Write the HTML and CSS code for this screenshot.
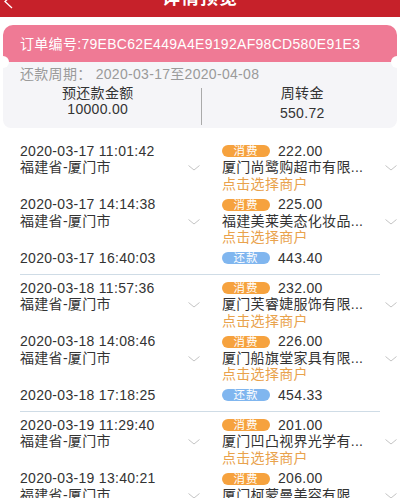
FILE: index.html
```html
<!DOCTYPE html>
<html lang="zh">
<head>
<meta charset="utf-8">
<link rel="stylesheet" href="styles.css">
</head>
<body>
<header class="topbar">
  <svg class="back" width="14" height="14" viewBox="0 0 14 14"><polyline points="12,-5 5,1.5 12,8" fill="none" stroke="#fff" stroke-width="1.3"/></svg>
  <div class="title">详情预览</div>
</header>

<section class="order">
  <div class="order-no">订单编号:79EBC62E449A4E9192AF98CD580E91E3</div>
  <div class="summary">
    <div class="period">还款周期： 2020-03-17至2020-04-08</div>
    <div class="stats">
      <div class="stat stat-left">
        <div class="stat-label">预还款金额</div>
        <div class="stat-value">10000.00</div>
      </div>
      <div class="divider"></div>
      <div class="stat stat-right">
        <div class="stat-label">周转金</div>
        <div class="stat-value stat-value-low">550.72</div>
      </div>
    </div>
  </div>
</section>

<main class="list">
  <div class="group">
    <div class="rec">
      <div class="left"><div class="line">2020-03-17 11:01:42</div><div class="line between">福建省-厦门市<svg class="chev" width="12" height="6" viewBox="0 0 12 6"><polyline points="0.5,0.5 6,5 11.5,0.5" fill="none" stroke="#c4c4c4" stroke-width="1"/></svg></div></div>
      <div class="right"><div class="line"><span class="badge pay">消费</span><span class="amt">222.00</span></div><div class="line between">厦门尚鹭购超市有限...<svg class="chev" width="12" height="6" viewBox="0 0 12 6"><polyline points="0.5,0.5 6,5 11.5,0.5" fill="none" stroke="#c4c4c4" stroke-width="1"/></svg></div><div class="line pick">点击选择商户</div></div>
    </div>
    <div class="rec">
      <div class="left"><div class="line">2020-03-17 14:14:38</div><div class="line between">福建省-厦门市<svg class="chev" width="12" height="6" viewBox="0 0 12 6"><polyline points="0.5,0.5 6,5 11.5,0.5" fill="none" stroke="#c4c4c4" stroke-width="1"/></svg></div></div>
      <div class="right"><div class="line"><span class="badge pay">消费</span><span class="amt">225.00</span></div><div class="line between">福建美莱美态化妆品...<svg class="chev" width="12" height="6" viewBox="0 0 12 6"><polyline points="0.5,0.5 6,5 11.5,0.5" fill="none" stroke="#c4c4c4" stroke-width="1"/></svg></div><div class="line pick">点击选择商户</div></div>
    </div>
    <div class="rec rec-repay">
      <div class="left"><div class="line">2020-03-17 16:40:03</div></div>
      <div class="right"><div class="line"><span class="badge repay">还款</span><span class="amt">443.40</span></div></div>
    </div>
  </div>
  <div class="sep"></div>
  <div class="group">
    <div class="rec">
      <div class="left"><div class="line">2020-03-18 11:57:36</div><div class="line between">福建省-厦门市<svg class="chev" width="12" height="6" viewBox="0 0 12 6"><polyline points="0.5,0.5 6,5 11.5,0.5" fill="none" stroke="#c4c4c4" stroke-width="1"/></svg></div></div>
      <div class="right"><div class="line"><span class="badge pay">消费</span><span class="amt">232.00</span></div><div class="line between">厦门芙睿婕服饰有限...<svg class="chev" width="12" height="6" viewBox="0 0 12 6"><polyline points="0.5,0.5 6,5 11.5,0.5" fill="none" stroke="#c4c4c4" stroke-width="1"/></svg></div><div class="line pick">点击选择商户</div></div>
    </div>
    <div class="rec">
      <div class="left"><div class="line">2020-03-18 14:08:46</div><div class="line between">福建省-厦门市<svg class="chev" width="12" height="6" viewBox="0 0 12 6"><polyline points="0.5,0.5 6,5 11.5,0.5" fill="none" stroke="#c4c4c4" stroke-width="1"/></svg></div></div>
      <div class="right"><div class="line"><span class="badge pay">消费</span><span class="amt">226.00</span></div><div class="line between">厦门船旗堂家具有限...<svg class="chev" width="12" height="6" viewBox="0 0 12 6"><polyline points="0.5,0.5 6,5 11.5,0.5" fill="none" stroke="#c4c4c4" stroke-width="1"/></svg></div><div class="line pick">点击选择商户</div></div>
    </div>
    <div class="rec rec-repay">
      <div class="left"><div class="line">2020-03-18 17:18:25</div></div>
      <div class="right"><div class="line"><span class="badge repay">还款</span><span class="amt">454.33</span></div></div>
    </div>
  </div>
  <div class="sep"></div>
  <div class="group">
    <div class="rec">
      <div class="left"><div class="line">2020-03-19 11:29:40</div><div class="line between">福建省-厦门市<svg class="chev" width="12" height="6" viewBox="0 0 12 6"><polyline points="0.5,0.5 6,5 11.5,0.5" fill="none" stroke="#c4c4c4" stroke-width="1"/></svg></div></div>
      <div class="right"><div class="line"><span class="badge pay">消费</span><span class="amt">201.00</span></div><div class="line between">厦门凹凸视界光学有...<svg class="chev" width="12" height="6" viewBox="0 0 12 6"><polyline points="0.5,0.5 6,5 11.5,0.5" fill="none" stroke="#c4c4c4" stroke-width="1"/></svg></div><div class="line pick">点击选择商户</div></div>
    </div>
    <div class="rec">
      <div class="left"><div class="line">2020-03-19 13:40:21</div><div class="line between">福建省-厦门市<svg class="chev" width="12" height="6" viewBox="0 0 12 6"><polyline points="0.5,0.5 6,5 11.5,0.5" fill="none" stroke="#c4c4c4" stroke-width="1"/></svg></div></div>
      <div class="right"><div class="line"><span class="badge pay">消费</span><span class="amt">206.00</span></div><div class="line between">厦门柯蒙曼美容有限...<svg class="chev" width="12" height="6" viewBox="0 0 12 6"><polyline points="0.5,0.5 6,5 11.5,0.5" fill="none" stroke="#c4c4c4" stroke-width="1"/></svg></div><div class="line pick">点击选择商户</div></div>
    </div>
  </div>
</main>
</body>
</html>
```
FILE: styles.css
```css
* { box-sizing: border-box; }
html, body { margin: 0; padding: 0; background: #fff; }
body {
  font-family: "Liberation Sans", "Noto Sans CJK SC", sans-serif;
  font-size: 14px;
  letter-spacing: 0.3px;
  color: #333;
  width: 400px;
  overflow: hidden;
}
.topbar {
  position: relative;
  height: 17px;
  background: #c6212a;
  overflow: hidden;
}
.back { position: absolute; left: 0; top: 0; }
.title {
  margin-top: -14px;
  line-height: 24px;
  text-align: center;
  color: #fff;
  font-size: 18px;
  font-weight: bold;
  letter-spacing: 1px;
}
.order {
  position: relative;
  margin: 8px 3px 0;
}
.order::before, .order::after {
  content: "";
  position: absolute;
  top: 31px;
  width: 12px;
  height: 12px;
  border-radius: 50%;
  background: #fff;
}
.order::before { left: -6px; }
.order::after { right: -6px; }
.order-no {
  height: 37px;
  line-height: 37px;
  padding-left: 17px;
  background: #ef7a95;
  color: #fff;
  border-radius: 10px 10px 0 0;
  padding-top: 1px;
}
.summary {
  background: #f5f5f8;
  border-radius: 0 0 8px 8px;
  padding: 4px 0 3px;
}
.period {
  line-height: 16px;
  padding-left: 17px;
  color: #9a9a9a;
}
.stats {
  display: flex;
  margin-top: 2px;
  height: 41px;
}
.stat { flex: 1; text-align: center; }
.stat-left { padding-right: 8px; }
.stat-right { padding-left: 6px; }
.stat-label { line-height: 18px; }
.stat-value { line-height: 14px; }
.stat-value-low { margin-top: 4px; }
.divider {
  width: 1px;
  margin-top: 4px;
  background: #aaa;
}
.list { margin-top: 10px; }
.group { padding: 4.75px 0 7.75px; }
.sep { height: 1px; margin: 0 20px; background: #cfdce6; }
.rec {
  display: flex;
  margin-bottom: 4px;
  padding-left: 20px;
}
.rec:last-child { margin-bottom: 0; }
.left { width: 180px; }
.right { flex: 1; margin-left: 22px; padding-right: 3px; }
.line {
  height: 16.5px;
  line-height: 16.5px;
  white-space: nowrap;
}
.between {
  display: flex;
  justify-content: space-between;
  align-items: center;
}
.chev { flex: none; margin-top: 1px; }
.pick { color: #e9a24c; }
.badge {
  display: inline-block;
  vertical-align: top;
  margin-top: 2.5px;
  width: 48px;
  height: 12px;
  line-height: 12px;
  border-radius: 6px;
  text-align: center;
  color: #fff;
  font-size: 11.5px;
  letter-spacing: 1px;
}
.pay { background: #f6a23e; }
.repay { background: #80b6ef; }
.amt { margin-left: 8px; }
```
